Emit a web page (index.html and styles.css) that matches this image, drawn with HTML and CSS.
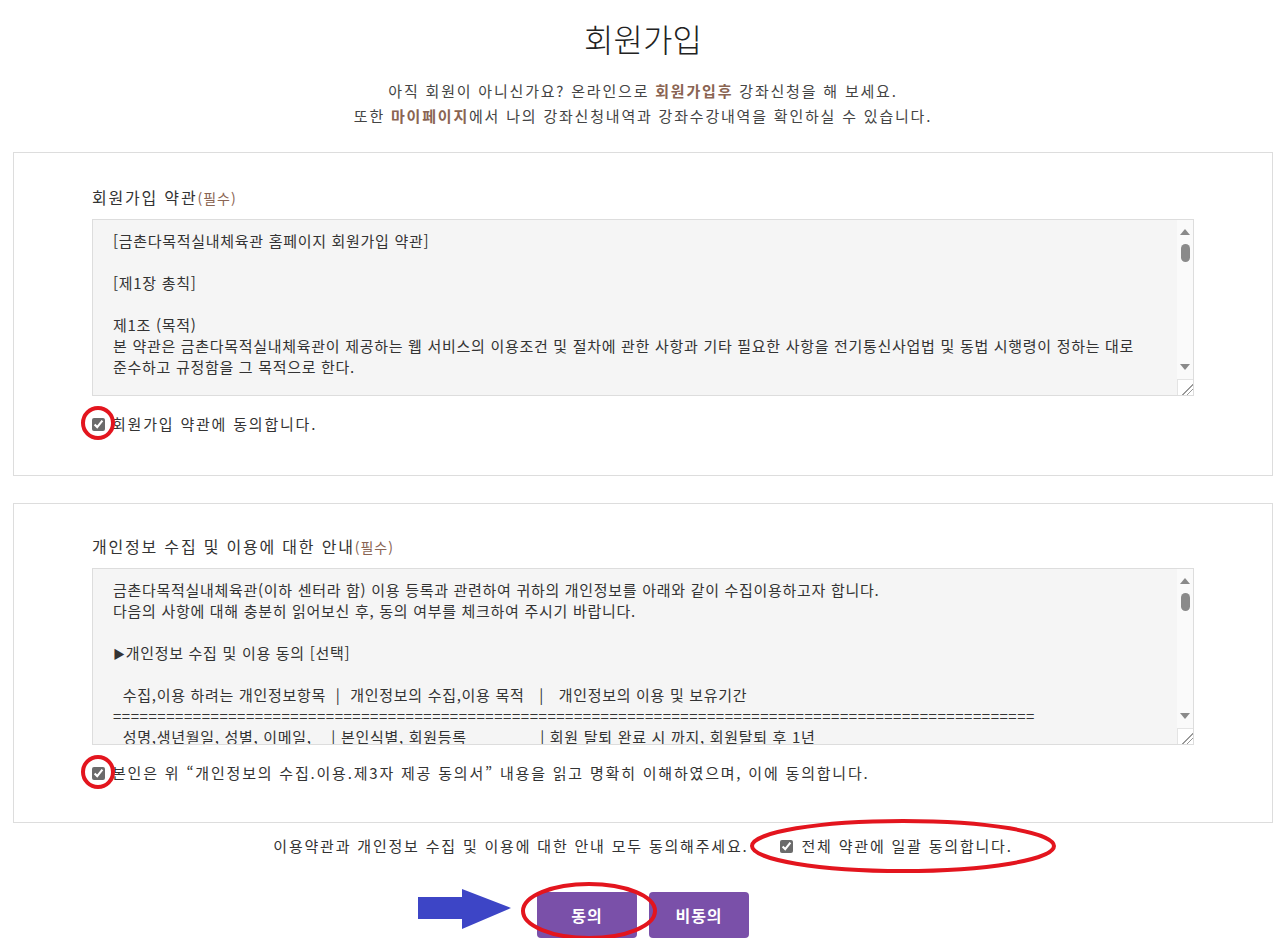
FILE: index.html
```html
<!DOCTYPE html>
<html lang="ko">

<head>
    <meta charset="UTF-8">
    <meta name="viewport" content="width=device-width, initial-scale=1.0">
    <title>회원가입</title>
    <link rel="stylesheet" href="styles.css">
</head>

<body>

    <div class="join">
        <h2 class="join-title">회원가입</h2>
        <p class="join-intro">
            아직 회원이 아니신가요? 온라인으로 <b>회원가입후</b> 강좌신청을 해 보세요.<br>
            또한 <b>마이페이지</b>에서 나의 강좌신청내역과 강좌수강내역을 확인하실 수 있습니다.
        </p>

        <div class="agree-box">
            <h4 class="agree-head">회원가입 약관<small>(필수)</small></h4>
            <div class="terms">
                <div class="terms-text">[금촌다목적실내체육관 홈페이지 회원가입 약관]

[제1장 총칙]

제1조 (목적)
본 약관은 금촌다목적실내체육관이 제공하는 웹 서비스의 이용조건 및 절차에 관한 사항과 기타 필요한 사항을 전기통신사업법 및 동법 시행령이 정하는 대로
준수하고 규정함을 그 목적으로 한다.

제2조 (약관의 효력 및 변경)
① 이 약관은 서비스 화면에 게시하거나 기타의 방법으로 회원에게 공시함으로써 효력을 발생합니다.</div>
                <div class="scrollbar">
                    <span class="scroll-btn"><i class="arrow-up"></i></span>
                    <span class="scroll-thumb"></span>
                    <span class="scroll-track"></span>
                    <span class="scroll-btn"><i class="arrow-down"></i></span>
                    <span class="scroll-corner"></span>
                </div>
            </div>
            <label class="agree-check"><input type="checkbox" checked>회원가입 약관에 동의합니다.</label>
        </div>

        <div class="agree-box">
            <h4 class="agree-head">개인정보 수집 및 이용에 대한 안내<small>(필수)</small></h4>
            <div class="terms">
                <div class="terms-text">금촌다목적실내체육관(이하 센터라 함) 이용 등록과 관련하여 귀하의 개인정보를 아래와 같이 수집이용하고자 합니다.
다음의 사항에 대해 충분히 읽어보신 후, 동의 여부를 체크하여 주시기 바랍니다.

<span class="tri">▶</span>개인정보 수집 및 이용 동의 [선택]

  수집,이용 하려는 개인정보항목  |  개인정보의 수집,이용 목적   |   개인정보의 이용 및 보유기간
<span class="rule">========================================================================================================</span>
  성명,생년월일, 성별, 이메일,    | 본인식별, 회원등록               | 회원 탈퇴 완료 시 까지, 회원탈퇴 후 1년
  휴대폰번호, 주소                | 강좌신청 및 안내                 |</div>
                <div class="scrollbar">
                    <span class="scroll-btn"><i class="arrow-up"></i></span>
                    <span class="scroll-thumb"></span>
                    <span class="scroll-track"></span>
                    <span class="scroll-btn"><i class="arrow-down"></i></span>
                    <span class="scroll-corner"></span>
                </div>
            </div>
            <label class="agree-check"><input type="checkbox" checked>본인은 위 “개인정보의 수집.이용.제3자 제공 동의서” 내용을 읽고 명확히 이해하였으며, 이에 동의합니다.</label>
        </div>

        <div class="agree-all">
            <span>이용약관과 개인정보 수집 및 이용에 대한 안내 모두 동의해주세요.</span>
            <label class="agree-check"><input type="checkbox" checked>전체 약관에 일괄 동의합니다.</label>
        </div>

        <div class="btn-group">
            <button type="button" class="btn">동의</button>
            <button type="button" class="btn">비동의</button>
        </div>
    </div>

    <!-- 안내용 표시 (빨간 원, 파란 화살표) -->
    <svg class="marks" width="1286" height="945" viewBox="0 0 1286 945">
        <ellipse cx="98" cy="423" rx="15" ry="15" />
        <ellipse cx="98" cy="772" rx="15" ry="15" />
        <ellipse cx="903" cy="846" rx="151" ry="25" />
        <ellipse cx="589" cy="911" rx="66" ry="27" />
        <polygon class="arrow" points="418,897 462,897 462,889 511,908 462,929 462,919 418,919" />
    </svg>

</body>

</html>
```

FILE: styles.css
```css
body {
    font-family: "Noto Sans CJK KR", "Noto Sans", sans-serif;
    margin: 0;
    padding: 0;
    background-color: #fff;
    color: #333;
    position: relative;
}

.join {
    width: 1260px;
    margin: 0 auto;
    padding-top: 18px;
}

.join-title {
    margin: 0;
    font-size: 32px;
    font-weight: 300;
    line-height: 40px;
    color: #222;
    text-align: center;
}

.join-intro {
    margin: 20px 0 0;
    font-size: 15px;
    line-height: 25px;
    letter-spacing: 1.8px;
    color: #444;
    text-align: center;
}

.join-intro b {
    color: #8a6452;
}

.agree-box {
    border: 1px solid #ddd;
    padding: 33px 78px 40px;
    margin-top: 24px;
}

.agree-box + .agree-box {
    margin-top: 27px;
    padding-top: 31px;
    padding-bottom: 38px;
}

.agree-head {
    margin: 0 0 11px;
    font-size: 16px;
    font-weight: normal;
    line-height: 22px;
    letter-spacing: 1.8px;
    color: #333;
}

.agree-head small {
    font-size: 14px;
    line-height: 1;
    color: #8a6452;
    letter-spacing: 1px;
}

/* 약관 내용 박스 */
.terms {
    display: flex;
    height: 175px;
    border: 1px solid #ddd;
    background-color: #f5f5f5;
}

.terms-text {
    flex: 1;
    overflow: hidden;
    padding: 10px 20px 0;
    font-size: 15px;
    line-height: 21px;
    letter-spacing: 0.7px;
    white-space: pre;
    color: #333;
}

.terms-text .tri {
    font-size: 12px;
    line-height: 1;
}

.terms-text .rule {
    letter-spacing: 0.54px;
}

.scrollbar {
    width: 16px;
    display: flex;
    flex-direction: column;
    align-items: center;
    background-color: #fafafa;
}

.scroll-btn {
    height: 24px;
    display: flex;
    align-items: center;
    justify-content: center;
}

.arrow-up,
.arrow-down {
    width: 0;
    height: 0;
    border-left: 5px solid transparent;
    border-right: 5px solid transparent;
}

.arrow-up {
    border-bottom: 6px solid #8a8a8a;
}

.arrow-down {
    border-top: 6px solid #8a8a8a;
}

.scroll-thumb {
    width: 9px;
    height: 18px;
    border-radius: 5px;
    background-color: #8a8a8a;
}

.scroll-track {
    flex: 1;
}

.scroll-corner {
    width: 16px;
    height: 16px;
    box-sizing: border-box;
    border-top: 1px solid #e4e4e4;
    border-left: 1px solid #e4e4e4;
    background: #fff linear-gradient(135deg, transparent 62%, #999 62%, #999 67%, transparent 67%, transparent 78%, #999 78%, #999 83%, transparent 83%);
}

.agree-check {
    display: flex;
    align-items: center;
    gap: 7px;
    margin-top: 17px;
    font-size: 15px;
    line-height: 22px;
    letter-spacing: 1.8px;
    color: #333;
}

.agree-check input {
    width: 13px;
    height: 13px;
    margin: 0;
    accent-color: #6b6b6b;
}

/* 전체 동의 */
.agree-all {
    display: flex;
    justify-content: center;
    align-items: center;
    gap: 31px;
    margin-top: 12px;
    font-size: 15px;
    line-height: 22px;
    letter-spacing: 1.8px;
}

.agree-all .agree-check {
    margin-top: 0;
    gap: 9px;
}

.btn-group {
    display: flex;
    justify-content: center;
    gap: 12px;
    margin-top: 35px;
}

.btn {
    width: 100px;
    height: 46px;
    border: none;
    border-radius: 4px;
    background-color: #7a50a9;
    color: #fff;
    font-family: inherit;
    font-size: 16px;
    font-weight: bold;
    letter-spacing: 1px;
    cursor: pointer;
}

.btn:hover {
    background-color: #6a4196;
}

.marks {
    position: absolute;
    top: 0;
    left: 0;
    pointer-events: none;
}

.marks ellipse {
    fill: none;
    stroke: #e3151e;
    stroke-width: 4;
}

.marks .arrow {
    fill: #3d45c6;
}
```
